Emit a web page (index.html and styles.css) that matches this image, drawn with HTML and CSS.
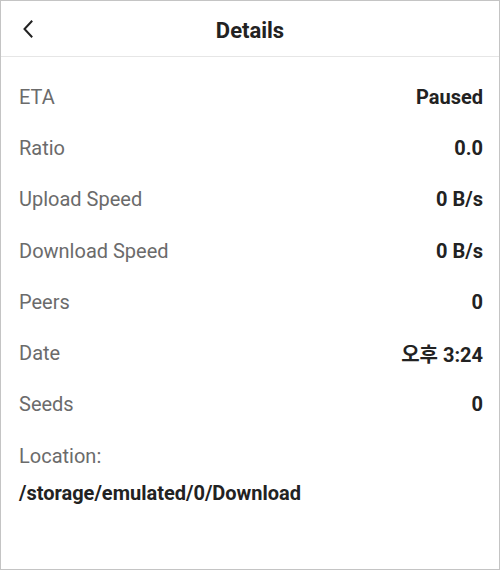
FILE: index.html
```html
<!DOCTYPE html>
<html lang="en">
<head>
  <meta charset="UTF-8">
  <meta name="viewport" content="width=device-width, initial-scale=1.0">
  <title>Details</title>
  <link rel="stylesheet" href="styles.css">
</head>
<body>

  <div class="screen">
    <div class="top-bar">
      <button class="back-btn" aria-label="Back">
        <svg width="12" height="18" viewBox="0 0 12 18">
          <path d="M9.5 1.5 L2.5 9 L9.5 16.5" fill="none" stroke="#222" stroke-width="2" stroke-linecap="square"/>
        </svg>
      </button>
      <h1 class="title">Details</h1>
    </div>

    <div class="info-list">
      <div class="info-row"><span class="label">ETA</span><span class="value">Paused</span></div>
      <div class="info-row"><span class="label">Ratio</span><span class="value">0.0</span></div>
      <div class="info-row"><span class="label">Upload Speed</span><span class="value">0 B/s</span></div>
      <div class="info-row"><span class="label">Download Speed</span><span class="value">0 B/s</span></div>
      <div class="info-row"><span class="label">Peers</span><span class="value">0</span></div>
      <div class="info-row"><span class="label">Date</span><span class="value">오후 3:24</span></div>
      <div class="info-row"><span class="label">Seeds</span><span class="value">0</span></div>
      <div class="location">
        <div class="label">Location:</div>
        <div class="path">/storage/emulated/0/Download</div>
      </div>
    </div>
  </div>

</body>
</html>
```

FILE: styles.css
```css
body {
  margin: 0;
  font-family: Roboto, "Noto Sans CJK KR", sans-serif;
  background: #fff;
}

.screen {
  width: 500px;
  height: 570px;
  box-sizing: border-box;
  border: 1px solid #c4c4c4;
  background: #fff;
}

.top-bar {
  position: relative;
  height: 55px;
  border-bottom: 1px solid #e6e6e6;
  display: flex;
  align-items: center;
  justify-content: center;
}

.back-btn {
  position: absolute;
  left: 15px;
  top: 15px;
  width: 24px;
  height: 26px;
  padding: 0;
  border: none;
  background: none;
  display: flex;
  align-items: center;
  justify-content: center;
}

.title {
  margin: 0;
  font-size: 22px;
  font-weight: bold;
  color: #222;
  padding-top: 3px;
}

.info-list {
  padding: 14px 16px 0 18px;
}

.info-row {
  height: 51.3px;
  display: flex;
  align-items: center;
  justify-content: space-between;
}

.label {
  font-size: 20px;
  color: #6b6b6b;
}

.value {
  font-size: 20px;
  font-weight: bold;
  color: #222;
}

.location .label {
  height: 51px;
  display: flex;
  align-items: center;
}

.path {
  font-size: 20px;
  font-weight: bold;
  color: #222;
}
```
